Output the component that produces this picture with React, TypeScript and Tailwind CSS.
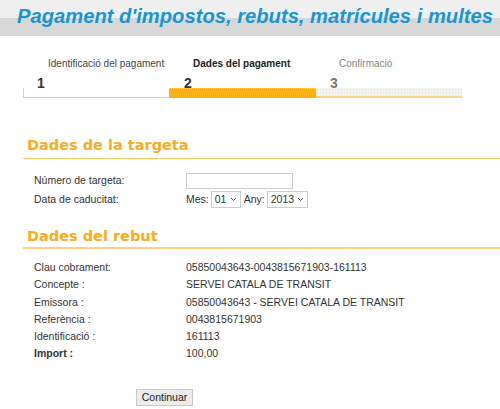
export default function App() {
  const rows = [
    { label: "Clau cobrament:", value: "05850043643-0043815671903-161113" },
    { label: "Concepte :", value: "SERVEI CATALA DE TRANSIT" },
    { label: "Emissora :", value: "05850043643 - SERVEI CATALA DE TRANSIT" },
    { label: "Referència :", value: "0043815671903" },
    { label: "Identificació :", value: "161113" },
    { label: "Import :", value: "100,00", bold: true },
  ];

  const dots =
    "bg-[radial-gradient(#d6d6d6_0.7px,transparent_0.8px)] bg-[length:2px_2px]";

  return (
    <div className="w-[500px] h-[409px] overflow-hidden bg-white font-['Liberation_Sans',Arial,sans-serif] text-[10.5px] text-[#333]">
      {/* Header */}
      <div className="h-[36px] bg-[#efefef] relative">
        <div className={`absolute left-0 right-0 top-[18px] bottom-0 ${dots} bg-[#eaeaea]`} />
        <h1 className="relative pl-[17px] pt-[2px] text-[20.2px] leading-[28px] font-bold italic text-[#1796d2] whitespace-nowrap">
          Pagament d'impostos, rebuts, matrícules i multes
        </h1>
      </div>

      {/* Steps */}
      <div className="mt-[20px] ml-[23px] flex">
        <div className="w-[146px]">
          <div className="pl-[25px] h-[16px] text-[10px] text-[#444] whitespace-nowrap">Identificació del pagament</div>
          <div className="pl-[14px] mt-[4px] h-[12px] text-[14px] leading-[14px] font-bold text-[#333]">1</div>
          <div className="h-[10px] border-l border-b border-[#fbcf80]" />
        </div>
        <div className="w-[147px]">
          <div className="pl-[24px] h-[16px] text-[10px] font-bold text-[#222] whitespace-nowrap">Dades del pagament</div>
          <div className="pl-[15px] mt-[4px] h-[12px] text-[14px] leading-[14px] font-bold text-[#333] relative z-10">2</div>
          <div className="h-[10px] bg-[#fbb116] border-t border-dotted border-[#ffe2a0]" />
        </div>
        <div className="w-[146px]">
          <div className="pl-[23px] h-[16px] text-[10px] text-[#888] whitespace-nowrap">Confirmació</div>
          <div className="pl-[14px] mt-[4px] h-[12px] text-[14px] leading-[14px] font-bold text-[#777]">3</div>
          <div className="h-[10px] bg-[#f2f2f2] border-b-2 border-[#fcd58a] bg-[radial-gradient(#fde4b4_0.7px,transparent_0.8px)] bg-[length:3px_3px]" />
        </div>
      </div>

      {/* Card */}
      <div className="mt-[37px] ml-[23px]">
        <h2 className="pl-[4px] text-[14.5px] leading-[20px] font-bold text-[#f8ad1b] font-['DejaVu_Sans',Verdana,sans-serif]">
          Dades de la targeta
        </h2>
        <div className="mt-[3px] border-b border-[#fbc760]" />
        <div className="mt-[14px] pl-[11px] flex flex-col gap-[2px]">
          <div className="flex items-center h-[16px]">
            <span className="w-[152px]">Número de targeta:</span>
            <input className="w-[107px] h-[16px] border border-[#ccc] bg-white" />
          </div>
          <div className="flex items-center h-[17px]">
            <span className="w-[152px]">Data de caducitat:</span>
            <span>Mes:</span>
            <span className="ml-[2px] h-[17px] w-[30px] border border-[#ccc] flex items-center justify-between px-[3px]">
              01
              <svg width="7" height="5" viewBox="0 0 7 5"><path d="M1 1l2.5 2.5L6 1" fill="none" stroke="#555" strokeWidth="1" /></svg>
            </span>
            <span className="ml-[3px]">Any:</span>
            <span className="ml-[2px] h-[17px] w-[41px] border border-[#ccc] flex items-center justify-between px-[3px]">
              2013
              <svg width="7" height="5" viewBox="0 0 7 5"><path d="M1 1l2.5 2.5L6 1" fill="none" stroke="#555" strokeWidth="1" /></svg>
            </span>
          </div>
        </div>
      </div>

      {/* Rebut */}
      <div className="mt-[18px] ml-[23px]">
        <h2 className="pl-[4px] text-[14.5px] leading-[20px] font-bold text-[#f8ad1b] font-['DejaVu_Sans',Verdana,sans-serif]">
          Dades del rebut
        </h2>
        <div className="mt-[1px] border-b-2 border-[#fdd27e]" />
        <div className="mt-[10px] pl-[11px] flex flex-col">
          {rows.map((r, i) => (
            <div key={i} className="flex h-[17.3px] leading-[17px]">
              <span className={`w-[152px] ${r.bold ? "font-bold" : ""}`}>{r.label}</span>
              <span>{r.value}</span>
            </div>
          ))}
        </div>
        <div className="mt-[26px] pl-[113px]">
          <button className="h-[17px] w-[57px] bg-[#ececec] border border-[#c8c8c8] text-[10.5px] leading-[14px] text-[#222]">
            Continuar
          </button>
        </div>
      </div>
    </div>
  );
}
